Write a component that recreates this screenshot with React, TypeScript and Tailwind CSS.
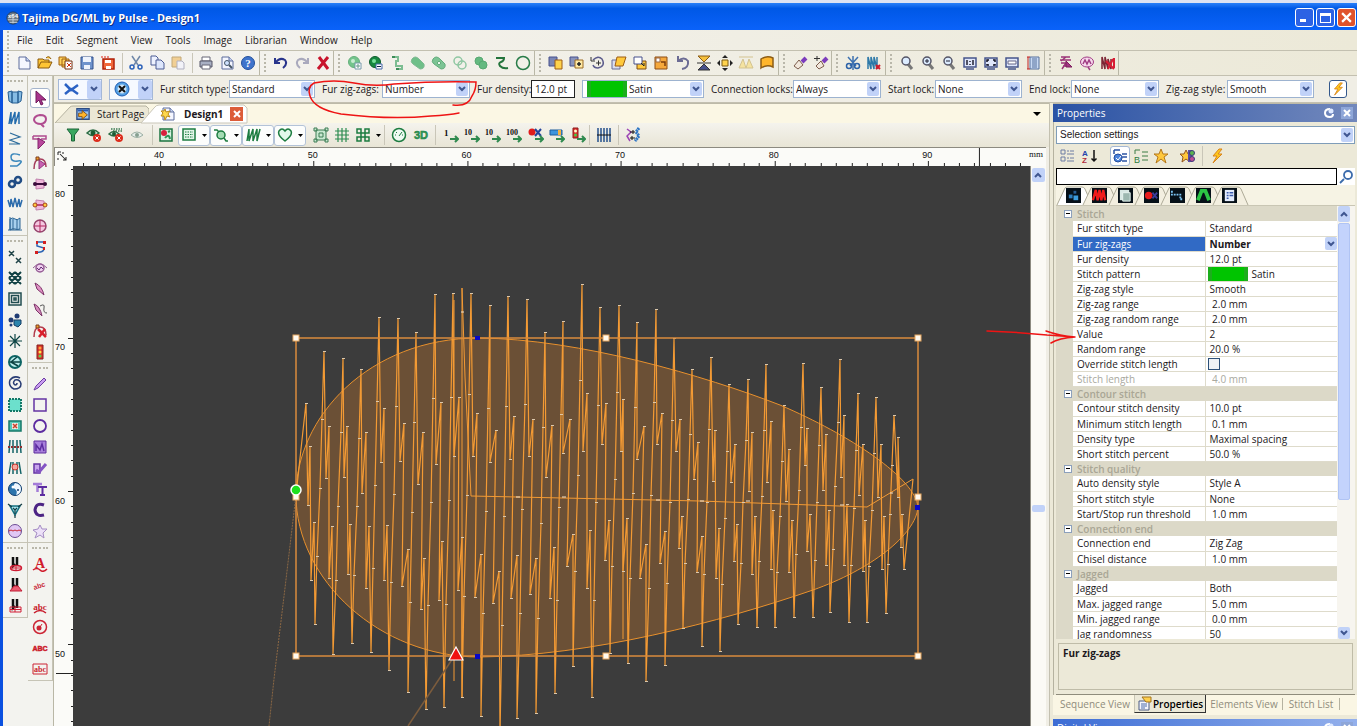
import { Fragment, type ReactNode } from "react";

const page = (
  <>
    <path d="M3 2h7l4 4v8H3z" fill="#f4f6ff" stroke="#5c6c9c" />
    <path d="M10 2v4h4" fill="#c6d2f0" stroke="#5c6c9c" />
  </>
);
const glass = (
  <>
    <path d="M9 9l4 5" stroke="#777" strokeWidth="3" />
    <circle cx="7" cy="6" r="4" fill="#dcecff" stroke="#556" strokeWidth="1.5" />
  </>
);
const needle = <path d="M6 1v9l2-2 M10 1v9" stroke="#111" strokeWidth="2.500" />;
const greenArrow = <path d="M7 12h8M12 9l3 3-3 3" stroke="#2f8a4f" strokeWidth="2" />;
const monitor = <path d="M2 3h12v9H2z M4 14h8" fill="#dfe6fa" stroke="#47568c" strokeWidth="1.5" />;

function glyph(text: string, fill: string, size = 9) {
  return (
    <text x="8" y="12" textAnchor="middle" fontSize={size} fontWeight="700" fill={fill} stroke="none" fontFamily="Liberation Serif, serif">
      {text}
    </text>
  );
}

const icons: Record<string, ReactNode> = {
  new: page,
  open: <path d="M1 13V4h5l1 1h5v3M1 13l3-6h11l-3 6zM9 3q3-3 5 1" fill="#ffc533" stroke="#8a5a10" />,
  multi: (
    <>
      <path d="M1 2h7v8H1zM4 4h7v8H4z" fill="#ffd25c" stroke="#a06010" />
      <path d="M7 6h7v8H7z" fill="#fff" stroke="#703010" />
      <path d="M9 8l4 4M13 8l-4 4" stroke="#d03010" />
    </>
  ),
  save: (
    <>
      <path d="M2 2h12v12H2z" fill="#6f93cc" stroke="#33518c" />
      <path d="M4 2h8v5H4zM5 10h6v4H5z" fill="#eef3fc" stroke="none" />
    </>
  ),
  saveRed: (
    <>
      <path d="M3 4h11v10H3z" fill="#f0683a" stroke="#b02008" strokeWidth="1.5" />
      <path d="M5 5h6v3H5zM6 11h5v3H6z" fill="#fff" stroke="none" />
      <path d="M1 2h9" stroke="#e02010" strokeDasharray="2 1" />
    </>
  ),
  cut: (
    <>
      <path d="M4 1l6 9M12 1L6 10" stroke="#6f87a8" strokeWidth="1.5" />
      <circle cx="4" cy="12" r="2" stroke="#2c62b8" strokeWidth="1.5" />
      <circle cx="12" cy="12" r="2" stroke="#2c62b8" strokeWidth="1.5" />
    </>
  ),
  copy: (
    <>
      <path d="M2 1h5l2 2v7H2z" fill="#eef2ff" stroke="#4c5c94" />
      <path d="M7 5h5l3 3v6H7z" fill="#dde6fc" stroke="#4c5c94" />
    </>
  ),
  paste: (
    <>
      <path d="M2 2h9v10H2z" fill="#f1cf94" stroke="#c2a878" />
      <path d="M7 6h5l2 2v6H7z" fill="#f2f2f8" stroke="#b0b0c0" />
    </>
  ),
  print: (
    <>
      <path d="M4 2h8v4H4z" fill="#fff" stroke="#667" />
      <path d="M2 6h12v6H2z" fill="#a9b0c4" stroke="#556" />
      <path d="M4 10h8v4H4z" fill="#fff" stroke="#667" />
    </>
  ),
  preview: (
    <>
      {page}
      <circle cx="8" cy="8" r="2.5" fill="#cfe2ff" stroke="#456" />
      <path d="M10 10l3 3" stroke="#456" strokeWidth="2" />
    </>
  ),
  help: (
    <>
      <circle cx="8" cy="8" r="6.5" fill="#3f74cc" stroke="#24509c" />
      {glyph("?", "#fff", 11)}
    </>
  ),
  undo: <path d="M2 3v5h5M3 7q4-5 9-2 3 4-2 8" stroke="#28348c" strokeWidth="2" />,
  redo: <path d="M14 3v5H9M13 7Q9 2 4 5q-3 4 2 8" stroke="#a9a9bd" strokeWidth="2" />,
  del: <path d="M4 2l9 12M13 2L3 14" stroke="#c8142c" strokeWidth="3" />,
  addG: (
    <>
      <circle cx="7" cy="7" r="5.5" fill="#74c48c" stroke="#64b07c" />
      <circle cx="6" cy="6" r="2" fill="#c8ecd2" stroke="none" />
      <path d="M8 8h6v6H8z" fill="#fff" stroke="#79a" />
      <path d="M11 9v4M9 11h4" stroke="#698" />
    </>
  ),
  subG: (
    <>
      <circle cx="7" cy="7" r="5.5" fill="#178840" stroke="#0c5c2c" />
      <circle cx="6" cy="6" r="2" fill="#7ae09c" stroke="none" />
      <path d="M8 9h6v5H8z" fill="#fff" stroke="#46a" />
      <path d="M9 11.500h4" stroke="#124" />
    </>
  ),
  steps: (
    <>
      <path d="M3 2h6v4H7v5h6v3H7" stroke="#7cbd92" strokeWidth="2" />
      <path d="M3 2h3M7 14h3" stroke="#3c8c58" strokeWidth="2" />
    </>
  ),
  pill: <path d="M2 4q3-4 7 0l5 5q1 5-4 5L3 9q-3-2-1-5z" fill="#6ebf88" stroke="#7fb892" />,
  pill2: (
    <>
      <path d="M2 4q3-4 7 0l5 5q1 5-4 5L3 9q-3-2-1-5z" fill="#7cc494" stroke="#64ac7c" />
      <path d="M6 8l2-2 2 2-2 2z" fill="#eaf7ee" stroke="#64ac7c" />
    </>
  ),
  rings: (
    <>
      <circle cx="6" cy="6" r="4" stroke="#8fc7a2" strokeWidth="1.5" />
      <circle cx="10" cy="10" r="4" stroke="#8fc7a2" strokeWidth="1.5" />
    </>
  ),
  blob: (
    <>
      <circle cx="6" cy="6" r="4" fill="#64b980" stroke="#58a872" />
      <circle cx="10" cy="10" r="4" fill="#64b980" stroke="#58a872" />
    </>
  ),
  path: <path d="M2 3h8q0 3-3 4t-1 4q3 3 8 2" stroke="#24743c" strokeWidth="2" />,
  circleG: <circle cx="8" cy="8" r="6.500" stroke="#287c48" strokeWidth="1.5" />,
  grpA: (
    <>
      <path d="M1 2h8v9H1z" fill="#7b86b4" stroke="#47518c" />
      <path d="M7 5h7v9H7z" fill="#ffd34c" stroke="#9c5c14" />
    </>
  ),
  grpB: (
    <>
      <path d="M1 2h8v9H1z" fill="#8a94bc" stroke="#47518c" />
      <path d="M6 5h8v8H6z" fill="#ffe9a4" stroke="#9c6c24" />
      <path d="M10 7v4M8 9h4" stroke="#222" strokeWidth="1.5" />
    </>
  ),
  rot: (
    <>
      <path d="M3 5q5-5 9-1 4 7-4 9-4 0-5-3" stroke="#5c5c8c" strokeWidth="1.5" />
      <path d="M1 2v4h4M6 8h5M8.500 5.500v5" stroke="#333" />
    </>
  ),
  skew: (
    <>
      <path d="M1 5h8v9H1z" fill="#d9ddf0" stroke="#666c98" />
      <path d="M6 2h9l-3 9H4z" fill="#ffc93c" stroke="#9c5c14" />
    </>
  ),
  scale: (
    <>
      <path d="M5 6h9v8H5z" fill="#ffc93c" stroke="#7c4c14" />
      <path d="M2 2h8v7H2z" fill="#fff" stroke="#47518c" />
      <path d="M9 8l3 3v-3" stroke="#222" />
    </>
  ),
  fit: (
    <>
      <path d="M2 2h12v12H2z" fill="#f5a83c" stroke="#8c4c14" />
      <path d="M3 3h4v4H3z" fill="#fff" stroke="#964" />
      <path d="M8 7h4v4" stroke="#7c3c0c" strokeWidth="1.500" />
    </>
  ),
  rotL: <path d="M3 1v5h5M3 6q6-5 10 0 1 7-6 8" stroke="#6c6c94" strokeWidth="2" />,
  flip: (
    <>
      <path d="M2 1h12L8 7z" fill="#f5c03c" stroke="#8c5c14" />
      <path d="M2 15h12L8 9zM1 8h14" fill="#47518c" stroke="#333" />
    </>
  ),
  move: (
    <>
      <path d="M8 0l3 3H5zM8 16l3-3H5zM0 8l3-3v6zM16 8l-3-3v6z" fill="#222" stroke="none" />
      <path d="M5 5h6v6H5z" fill="#ffd34c" stroke="#7c5c14" />
    </>
  ),
  peaks: <path d="M1 13h14M1 13l4-9 3 9 3-9 4 9M1 2h14" fill="#f5e3a0" stroke="#d3c390" />,
  warp: <path d="M2 4q6-4 12-1v9q-6-3-12 1z" fill="#ffb62c" stroke="#8c5c14" strokeWidth="1.5" />,
  brush: (
    <>
      <path d="M14 3l-4 4" stroke="#7c3cbc" strokeWidth="4" />
      <path d="M7 5l4 5-5 4-4-3z" fill="#f2e8dc" stroke="#7c5c4c" />
    </>
  ),
  brushP: (
    <>
      <path d="M14 3l-4 4" stroke="#7c3cbc" strokeWidth="4" />
      <path d="M8 6l3 5-5 3-3-3z" fill="#f2e8dc" stroke="#7c5c4c" />
      <path d="M4 1v5M1 3.500h6" stroke="#333" />
    </>
  ),
  trim: (
    <>
      <path d="M3 2l8 9M13 2L5 11M8 1v14" stroke="#3f72b0" strokeWidth="1.5" />
      <circle cx="4" cy="11" r="2.500" stroke="#2c62a8" strokeWidth="1.5" />
      <circle cx="12" cy="11" r="2.500" stroke="#2c62a8" strokeWidth="1.5" />
    </>
  ),
  stitchX: (
    <>
      <path d="M2 14V2l3 12V2l3 12V2l3 12V2" stroke="#2c78a8" strokeWidth="1.500" />
      <path d="M10 10l4 4M14 10l-4 4" stroke="#d01c2c" strokeWidth="2" />
    </>
  ),
  zoom: glass,
  zoomIn: (
    <>
      {glass}
      <path d="M7 4v4M5 6h4" stroke="#223" />
    </>
  ),
  zoomOut: (
    <>
      {glass}
      <path d="M5 6h4" stroke="#223" />
    </>
  ),
  mon11: (
    <>
      {monitor}
      <path d="M5 5v5M11 5v5M8 6v1M8 9v1" stroke="#223" strokeWidth="1.500" />
    </>
  ),
  monFit: (
    <>
      {monitor}
      <path d="M4 7V5h2M10 5h2v2M4 9v1h2M10 10h2V9" stroke="#112" strokeWidth="1.500" />
    </>
  ),
  monSel: (
    <>
      {monitor}
      <path d="M4 6h8v3H4z" fill="#fff" stroke="#668" />
    </>
  ),
  ruler: (
    <>
      <path d="M5 2h9v12H5z" fill="#c8daf4" stroke="#56709c" />
      <path d="M2 2h3M2 14h3M3 2v12" stroke="#c02020" />
      <path d="M7 4h5M7 6h5M7 8h5M7 10h5M7 12h5" stroke="#56709c" />
    </>
  ),
  seqP: (
    <>
      <path d="M3 2h9M2 5h11M3 8h5M5 11h3M8 2L3 6M8 8l-4 6" stroke="#9c3478" strokeWidth="1.500" />
      <path d="M8 6l6 6H8z" fill="#a43484" stroke="#7c1c5c" />
    </>
  ),
  wave: (
    <>
      <ellipse cx="8" cy="7" rx="6.500" ry="5" fill="#f6d8ec" stroke="#a03c84" />
      <path d="M4 9l2-4 2 4 2-4 2 4M9 12l2 3" stroke="#a03c84" strokeWidth="1.500" />
    </>
  ),
  redStitch: (
    <>
      <path d="M2 14V2l3 12V2l3 12V4l3 10V4" stroke="#7c2434" strokeWidth="1.500" />
      <path d="M6 6l8 8M13 4l-5 10M14 3v10" stroke="#d81c34" strokeWidth="2" />
    </>
  ),
  trimBlue: <path d="M2 3l6 6 7-5M2 13l6-5 7 5" stroke="#2b62c4" strokeWidth="2.500" />,
  stopBlue: (
    <>
      <circle cx="8" cy="8" r="7" fill="#54a0e4" stroke="#1c5cb4" />
      <circle cx="8" cy="8" r="4.500" fill="#cfe6fa" stroke="none" />
      <path d="M5 5l6 6M11 5l-6 6" stroke="#111" strokeWidth="2" />
    </>
  ),
  bolt: <path d="M10 1L4 8h4l-4 7 9-9H9l4-5z" fill="#ffc81c" stroke="#d8841c" />,
  filter: <path d="M2 2h12L9.500 8v6h-3V8z" fill="#3aa860" stroke="#1c6438" />,
  eyeX: (
    <>
      <path d="M1 6q6-6 12 0-6 5-12 0z" fill="#d9f0e0" stroke="#2c6c44" strokeWidth="1.500" />
      <circle cx="7" cy="6" r="2.500" fill="#1c5c34" stroke="none" />
      <circle cx="11" cy="11" r="4" fill="#dc2c1c" stroke="none" />
      <path d="M9.500 9.500l3 3M12.500 9.500l-3 3" stroke="#fff" />
    </>
  ),
  eyeDots: (
    <>
      <path d="M3 2h11M5 4h9" stroke="#3c7c54" strokeWidth="1.500" strokeDasharray="1.500 1" />
      <path d="M1 7q5-5 10 0-5 4-10 0z" fill="#d9f0e0" stroke="#2c6c44" strokeWidth="1.500" />
      <circle cx="6" cy="7" r="2" fill="#1c5c34" stroke="none" />
      <circle cx="11" cy="11" r="4" fill="#dc2c1c" stroke="none" />
      <path d="M9.500 9.500l3 3M12.500 9.500l-3 3" stroke="#fff" />
    </>
  ),
  eye: (
    <>
      <path d="M2 8q6-6 12 0-6 5-12 0z" fill="#e8eeea" stroke="#9cb0a4" />
      <circle cx="8" cy="8" r="2" fill="#86a090" stroke="none" />
    </>
  ),
  picRed: (
    <>
      <path d="M2 2h12v12H2z" fill="#d8f2e0" stroke="#1c7440" strokeWidth="1.500" />
      <circle cx="6" cy="6" r="3" fill="#d8203c" stroke="none" />
      <path d="M7 11q4-5 5 1M10 5l2-1" stroke="#2c9454" strokeWidth="2" />
    </>
  ),
  dots: (
    <>
      <path d="M2 2h12v11H2z" fill="#e2f5e8" stroke="#1c7c40" strokeWidth="1.500" />
      <path d="M4 5h8M4 7.500h8M4 10h8" stroke="#1c7c40" strokeWidth="1.200" strokeDasharray="1.500 1" />
    </>
  ),
  lens: (
    <>
      <circle cx="8" cy="8" r="4" fill="#a4dcb4" stroke="#1c7c40" strokeWidth="1.500" />
      <path d="M1 3h3l2 2M11 11l2 3h2" stroke="#1c7c40" strokeWidth="1.500" />
    </>
  ),
  zig: <path d="M2 14L4 2v12L8 2v12l4-12v12l3-12" stroke="#1c7c40" strokeWidth="1.500" />,
  heart: <path d="M8 14Q0 8 2 4q3-4 6 0 3-4 6 0 2 4-6 10z" fill="#e2f8ea" stroke="#1c7c40" strokeWidth="1.500" />,
  frame: <path d="M3 3h10v10H3zM1 1h3v3H1zM12 1h3v3h-3zM1 12h3v3H1zM12 12h3v3h-3zM6 6h4v4H6z" fill="#c8e8d0" stroke="#3c7c54" />,
  grid: <path d="M4 1v14M8 1v14M12 1v14M1 4h14M1 8h14M1 12h14" stroke="#2c8c50" strokeWidth="1.200" />,
  cmd: <path d="M6 6v4h4V6zM6 6H2V2h4zM10 6V2h4v4zM6 10v4H2v-4zM10 10h4v4h-4z" stroke="#1c7c40" strokeWidth="1.500" />,
  gauge: (
    <>
      <circle cx="8" cy="8" r="6.500" fill="#eefaf2" stroke="#1c7c40" strokeWidth="1.500" />
      <path d="M8 9l3-4M5 5l1 1M4 8h1M11 8h1" stroke="#1c7c40" />
    </>
  ),
  threeD: (
    <text x="8" y="12" textAnchor="middle" fontSize="11" fontWeight="700" fill="#2c9c58" fontFamily="Liberation Sans, sans-serif" stroke="#1c7c40" strokeWidth="0.500">3D</text>
  ),
  one: <><text x="1" y="9" fontSize="9" fontWeight="700" stroke="none" fill="#111" fontFamily="Liberation Serif, serif">1</text>{greenArrow}</>,
  ten: <g><text x="0" y="8" fontSize="8" fontWeight="700" stroke="none" fill="#111" fontFamily="Liberation Serif, serif">10</text>{greenArrow}</g>,
  hundred: <g><text x="0" y="8" fontSize="8" fontWeight="700" stroke="none" fill="#111" fontFamily="Liberation Serif, serif">100</text>{greenArrow}</g>,
  dotX: (
    <>
      <circle cx="4" cy="5" r="3.500" fill="#e01c1c" stroke="none" />
      <path d="M7 2l6 7M13 2L7 9" stroke="#24449c" strokeWidth="2" />
      {greenArrow}
    </>
  ),
  tube: (
    <>
      <path d="M1 3h12v5H1z" fill="#3c94dc" stroke="#1c5c9c" />
      <path d="M9 3h3v5H9z" fill="#f5b03c" stroke="none" />
      {greenArrow}
    </>
  ),
  light: (
    <>
      <path d="M3 1h5v10H3z" fill="#dc2c2c" stroke="#8c1c1c" />
      <circle cx="5.500" cy="4" r="1.500" fill="#ffc" stroke="none" />
      <circle cx="5.500" cy="8" r="1.500" fill="#4c4" stroke="none" />
      {greenArrow}
    </>
  ),
  comb: (
    <>
      <path d="M2 1v14M5 1v14M8 1v14M11 1v14M14 1v14" stroke="#24508c" strokeWidth="1.500" />
      <path d="M1 8h14" stroke="#111" />
    </>
  ),
  morph: (
    <>
      <path d="M2 2l4 3-4 4 3 5" stroke="#9c44b4" strokeWidth="1.500" />
      <path d="M5 5h5M10 11H5M8 3v4M7 9v4" stroke="#111" />
      <path d="M14 1l-3 4 3 4-4 5" stroke="#2c74c4" strokeWidth="3" strokeDasharray="2 0.500" />
    </>
  ),
  // segment palette
  satin: <path d="M1 3l4-1v12l-3-2zM5 3h6v11H5zM11 2l4 1-1 9-3 2z" fill="#86bce4" stroke="#245c90" />,
  steil: <path d="M2 14L4 2v12L8 2v12l4-12v12" stroke="#246cac" strokeWidth="1.500" />,
  zed: <path d="M3 2l10 4L3 9l10 4H2" stroke="#2c6c9c" strokeWidth="1.200" />,
  ess: <path d="M13 3Q4 0 4 5t7 4-1 5H3" stroke="#3c88bc" strokeWidth="1.500" />,
  links: (
    <>
      <circle cx="5" cy="10" r="3" stroke="#204c84" strokeWidth="2.500" />
      <circle cx="11" cy="6" r="3" stroke="#204c84" strokeWidth="2.500" />
    </>
  ),
  grass: <path d="M1 5l2 7 1-8 2 8 2-9 2 9 2-8 1 8 2-7" stroke="#2c6cac" strokeWidth="1.500" />,
  fill: <path d="M3 3q3-2 5 0t5-1v11q-3 1-5 0t-5 1zM6 3v11M10 3v11M1 14h14M3 1v13" fill="#a8d0ee" stroke="#2c6494" />,
  xx: <path d="M2 2l5 5M7 2L2 7M9 9l5 5M14 9l-5 5" stroke="#204448" strokeWidth="1.500" />,
  mesh: <path d="M2 2l12 12M8 2l6 6M2 8l6 6M14 2L2 14M8 2L2 8M14 8l-6 6" stroke="#104044" strokeWidth="2" />,
  spiralSq: <path d="M2 2h12v12H2zM4.500 4.500h7v7h-7zM7 7h2v2H7z" stroke="#204c50" strokeWidth="1.500" />,
  motif: (
    <>
      <path d="M7 8h7v4l-3 3-4-2z" fill="#2c84ac" stroke="#143c64" />
      <circle cx="4" cy="8" r="2.500" fill="#203c74" stroke="none" />
      <circle cx="10" cy="4" r="2.500" fill="#203c74" stroke="none" />
      <circle cx="4" cy="13" r="1.500" fill="#203c74" stroke="none" />
    </>
  ),
  star: <path d="M8 1v14M1 8h14M3 3l10 10M13 3L3 13" stroke="#0c4444" strokeWidth="1.200" />,
  wheel: (
    <>
      <circle cx="8" cy="8" r="6" fill="#b8ecec" stroke="#0c6464" strokeWidth="2" />
      <path d="M3 8h10M4 8l6-5M4 8l7 4" stroke="#0c4444" strokeWidth="1.500" />
    </>
  ),
  swirl: <path d="M13 3Q7 0 3 5q-2 6 4 9 7 0 7-5-1-5-6-4-3 3 0 5 2 0 2-2" stroke="#283c74" strokeWidth="1.500" />,
  patch: <path d="M2 2h12v12H2z" fill="#6ce0cc" stroke="#147868" strokeWidth="2" strokeDasharray="2 1" />,
  patchX: (
    <>
      <path d="M2 3h12v10H2z" fill="#58c8b8" stroke="#147868" strokeWidth="1.500" />
      <path d="M5 5h6v6H5z" fill="#f4e8e0" stroke="none" />
      <path d="M6 6l4 4M10 6l-4 4" stroke="#c8402c" strokeWidth="1.500" />
    </>
  ),
  combR: (
    <>
      <path d="M3 1l-1 13M6 1v13M10 1v13M13 1l1 13" stroke="#146468" strokeWidth="1.500" />
      <path d="M1 8h14" stroke="#903030" strokeWidth="2" strokeDasharray="2 1" />
    </>
  ),
  combRose: (
    <>
      <path d="M4 2L2 14M6 2v12M10 2v12M12 2l2 12" stroke="#146468" strokeWidth="1.500" />
      <circle cx="8" cy="7" r="3" fill="#f4a8a0" stroke="#c8342c" />
    </>
  ),
  yin: (
    <>
      <circle cx="8" cy="8" r="6.500" fill="#2c74ac" stroke="#143c6c" />
      <path d="M8 2q6 1 6 6t-5 6q2-4-1-6t0-6z" fill="#f0f8ff" stroke="none" />
      <circle cx="6" cy="6" r="1.500" fill="#fff" stroke="none" />
      <circle cx="11" cy="9" r="1" fill="#143c6c" stroke="none" />
    </>
  ),
  tri: (
    <>
      <path d="M3 4h10L8 13z" fill="#a8e4ec" stroke="#147080" strokeWidth="1.500" />
      <path d="M1 2l4 3M15 2l-4 3M8 13v3M8 8v4M8 8L6 6M8 8l2-2" stroke="#143c44" strokeWidth="1.200" />
    </>
  ),
  ballR: (
    <>
      <circle cx="8" cy="8" r="6.500" fill="#e0c8f4" stroke="#6c4c94" />
      <path d="M2 8l2-1 2 1 2-1 2 1 2-1 2 1" stroke="#c8242c" />
    </>
  ),
  needleO: <>{needle}<ellipse cx="9" cy="12" rx="5.500" ry="2.500" stroke="#d01c34" strokeWidth="1.500" /><path d="M9 9v6M4 12h10" stroke="#d01c34" /></>,
  needleT: <>{needle}<path d="M3 14l4-5h4l4 5z" fill="#ee5c70" stroke="#c01c34" /></>,
  needleB: <>{needle}<path d="M3 9h11v5H3zM8 9v5M3 11.500h11" stroke="#d01c34" /></>,
  // selection palette
  arrow: <path d="M4 1v12l3-3 2 5 2-1-2-4h5z" fill="#a8348c" stroke="#701c5c" />,
  lasso: <path d="M8 2q6 0 6 4t-5 5q-6 0-7-4 0-4 6-5zM9 11l3 3" stroke="#b04c90" strokeWidth="2" />,
  polysel: (
    <>
      <path d="M1 2h13v3H9M1 2v3h5" stroke="#b04c90" strokeWidth="1.500" />
      <path d="M6 4v11l7-7z" fill="#b8489c" stroke="#84246c" />
    </>
  ),
  node: (
    <>
      <path d="M2 14Q2 4 8 4t6 8" stroke="#a43c5c" strokeWidth="1.500" />
      <path d="M7 5v9l6-5z" fill="#c860b0" stroke="#94347c" />
      <path d="M4 2h3v3H4z" fill="#f4a02c" stroke="#7c3c1c" />
    </>
  ),
  angleB: (
    <>
      <path d="M4 3l8 1v8l-8 1z" fill="#f0b8dc" stroke="#c080ac" />
      <path d="M2 8h12" stroke="#3c0c3c" strokeWidth="2" />
      <circle cx="3" cy="8" r="2" fill="#3c0c3c" stroke="none" />
      <circle cx="13" cy="8" r="2" fill="#3c0c3c" stroke="none" />
    </>
  ),
  angleO: (
    <>
      <path d="M4 3l8 1v8l-8 1z" fill="#f0b8dc" stroke="#c080ac" />
      <path d="M2 8h12" stroke="#b0245c" strokeWidth="1.500" />
      <circle cx="3" cy="8" r="2" fill="#ffc83c" stroke="#a4441c" />
      <circle cx="13" cy="8" r="2" fill="#ffc83c" stroke="#a4441c" />
    </>
  ),
  target: (
    <>
      <circle cx="8" cy="8" r="6" fill="#f4c8e0" stroke="#94446c" strokeWidth="1.500" />
      <path d="M8 2v12M2 8h12" stroke="#b0245c" />
    </>
  ),
  curveR: (
    <>
      <path d="M12 3H5v4l7 2q0 5-8 4" stroke="#2c64b4" strokeWidth="1.500" />
      <path d="M11 2h3v3h-3zM4 2h2v3H4zM3 12h3v3H3zM11 8h2v3h-2z" fill="#d42020" stroke="none" />
    </>
  ),
  eyeP: (
    <>
      <path d="M1 8q7-8 14 0" stroke="#945c94" />
      <circle cx="8" cy="8" r="4" fill="#f0d0f0" stroke="#945c94" strokeWidth="1.500" />
      <path d="M5 8l2 2 2-3 2 2" stroke="#642c74" />
    </>
  ),
  knife: <path d="M3 2q7 3 9 12L5 8z" fill="#e090c4" stroke="#7c3468" />,
  knife2: (
    <>
      <path d="M2 2q6 2 8 12L4 8z" fill="#d48cbc" stroke="#7c3468" />
      <path d="M8 4q5-3 4 2t3 5" stroke="#555" />
    </>
  ),
  nodeX: (
    <>
      <path d="M2 14Q2 4 8 4t6 8" stroke="#b03c4c" strokeWidth="1.500" />
      <path d="M6 6l8 8M13 6l-6 8" stroke="#d8202c" strokeWidth="2.500" />
      <path d="M4 2h3v3H4z" fill="#f4a02c" stroke="#7c3c1c" />
    </>
  ),
  traffic: (
    <>
      <path d="M5 1h6v14H5z" fill="#d8342c" stroke="#84201c" />
      <circle cx="8" cy="4" r="1.500" fill="#ffa43c" stroke="none" />
      <circle cx="8" cy="8" r="1.500" fill="#ffe44c" stroke="none" />
      <circle cx="8" cy="12" r="1.500" fill="#5cd44c" stroke="none" />
    </>
  ),
  pencil: <path d="M2 14l2-4 8-8 2 2-8 8z" fill="#c89cf0" stroke="#6c3ca4" />,
  rectP: <path d="M2 2h12v12H2z" stroke="#6434a4" strokeWidth="1.500" />,
  ringP: <circle cx="8" cy="8" r="6" stroke="#5c2ca0" strokeWidth="1.800" />,
  picP: (
    <>
      <path d="M2 2h12v12H2z" fill="#a880dc" stroke="#5c2c9c" />
      <path d="M4 12V6l4 5 2-6 2 7" stroke="#5c2ca0" strokeWidth="1.500" />
    </>
  ),
  digit: (
    <>
      <path d="M2 4h6v9H2z" fill="#c8a4ec" stroke="#6434a4" strokeWidth="1.500" />
      <path d="M4 10l3 2 7-8" stroke="#8454c4" strokeWidth="3" />
    </>
  ),
  tt: (
    <>
      <path d="M1 3h9M5.500 3v8" stroke="#a47cd8" strokeWidth="2.500" />
      <path d="M6 6h9M10.500 6v8M8 14h5" stroke="#5c2ca0" strokeWidth="2" />
    </>
  ),
  cee: <path d="M12 3Q4 0 3 8q1 7 9 5" stroke="#4c2484" strokeWidth="3" />,
  starP: <path d="M8 2l2 4 5 0-4 4 1 5-4-3-5 3 2-5-4-3 5-1z" fill="#ece0f8" stroke="#a48cc4" />,
  letA: <>{glyph("A", "#d01c2c", 14)}<path d="M1 14q4-3 7 0t7-1" stroke="#d01c2c" strokeWidth="1.500" /></>,
  abSlant: (
    <text x="1" y="11" fontSize="7" fontWeight="700" fill="#c82838" stroke="none" transform="rotate(-18 8 8)" fontFamily="Liberation Sans, sans-serif">abc</text>
  ),
  abArc: <>{glyph("abc", "#c81c2c", 9)}<path d="M2 15q6-5 12 0" stroke="#c81c2c" strokeWidth="1.500" /></>,
  spiralR: (
    <>
      <circle cx="8" cy="8" r="6.500" stroke="#cc2434" strokeWidth="1.500" />
      <circle cx="7" cy="9" r="2.500" fill="#cc2434" stroke="none" />
      <path d="M8 8l2-3" stroke="#cc2434" />
    </>
  ),
  abcBold: (
    <text x="8" y="11" textAnchor="middle" fontSize="7" fontWeight="700" fill="#cc1c2c" stroke="#cc1c2c" strokeWidth="0.500" fontFamily="Liberation Sans, sans-serif">ABC</text>
  ),
  abcBox: <><path d="M1 3h14v10H1z" stroke="#cc2434" /><text x="8" y="11" textAnchor="middle" fontSize="8" fontWeight="700" fill="#c81c2c" stroke="none" fontFamily="Liberation Serif, serif">abc</text></>,
  // property panel
  tree: <path d="M1 2h4v4H1zM1 9h4v4H1zM7 3h2M10 3h4M7 6h7M7 10h2M10 10h4M7 13h7" stroke="#6c7ca4" />,
  az: (
    <>
      <text x="0" y="8" fontSize="8" fontWeight="700" fill="#2444ac" stroke="none" fontFamily="Liberation Sans, sans-serif">A</text>
      <text x="0" y="15" fontSize="8" fontWeight="700" fill="#b02c3c" stroke="none" fontFamily="Liberation Sans, sans-serif">Z</text>
      <path d="M12 2v11M9.500 10.500L12 13l2.500-2.500" stroke="#111" strokeWidth="1.500" />
    </>
  ),
  treeChk: (
    <>
      <path d="M2 2h6M2 2v4M10 6h5M10 9h5M10 13h5" stroke="#2c54a4" strokeWidth="1.500" />
      <circle cx="6" cy="10" r="4" fill="#4c84dc" stroke="#244c9c" />
      <path d="M4 10l2 2 3-4" stroke="#fff" />
    </>
  ),
  treeB: (
    <>
      <path d="M2 6V2h5M9 4h6M9 8h6M9 12h6" stroke="#3c7c44" />
      <text x="1" y="15" fontSize="9" fill="#2c7c3c" stroke="none" fontFamily="Liberation Sans, sans-serif">B</text>
    </>
  ),
  fav: <path d="M8 1l2 5h5l-4 3 2 6-5-4-5 4 2-6-4-3h5z" fill="#ffc83c" stroke="#b4781c" />,
  favB: (
    <>
      <path d="M6 2l2 4h4l-3 3 1 5-4-3-4 3 1-5-3-3h4z" fill="#ffc83c" stroke="#94541c" />
      <path d="M8 2h4v12H8z" fill="#5c4ca4" stroke="none" />
      <circle cx="12" cy="5" r="2.500" fill="#5cb44c" stroke="#3c3c7c" />
      <circle cx="12" cy="11" r="2.500" fill="#c04c94" stroke="#3c3c7c" />
    </>
  ),
  search: <path d="M6 10l-4 4M10 2a4 4 0 1 1 0 8 4 4 0 0 1 0-8z" stroke="#3c6cac" strokeWidth="1.800" />,
  logo: (
    <>
      <circle cx="8" cy="8" r="7" fill="#6c7884" stroke="#243c5c" />
      <path d="M2 10h12M4 13h9M8 8v6" stroke="#c8d4dc" />
      <text x="8" y="8" textAnchor="middle" fontSize="7" fontWeight="700" fill="#fff" stroke="none" fontFamily="Liberation Sans, sans-serif">x64</text>
    </>
  ),
  startPage: (
    <>
      <path d="M1 2h14v12H1z" fill="#9cc4f0" stroke="#2c4c84" strokeWidth="1.500" />
      <path d="M2 3h12v2H2z" fill="#2c5cb4" stroke="none" />
      <path d="M3 7h4V4l6 5-6 5v-3H3z" fill="#ffb42c" stroke="#7c4c14" />
    </>
  ),
  docStar: <>{page}<path d="M5 3l1 3 4-1-2 3 2 3-3-1-2 4-1-4-3 0 2-3-2-2 3 0z" fill="#ffd84c" stroke="#bc8c1c" /></>,
  hand: (
    <>
      <path d="M2 5h10v9H2z" fill="#f4f4fc" stroke="#4c5c84" />
      <path d="M4 8h6M4 10h6M4 12h4" stroke="#4c6cac" />
      <path d="M5 1h9v5H9z" fill="#ffd04c" stroke="#a4741c" />
    </>
  ),
};

function Icon({ name, className = "" }: { name: string; className?: string }) {
  return (
    <svg viewBox="0 0 16 16" className={`h-4 w-4 shrink-0 ${className}`} fill="none" stroke="#333" strokeWidth="1" aria-hidden="true">
      {icons[name]}
    </svg>
  );
}

function IconButton({ name }: { name: string }) {
  return (
    <button type="button" aria-label={name} className="flex items-center justify-center">
      <Icon name={name} />
    </button>
  );
}

function Chevron({ className = "h-[15px] w-3" }: { className?: string }) {
  return (
    <span className={`flex items-center justify-center rounded-[2px] bg-[#c1d2f8] ${className}`}>
      <svg viewBox="0 0 8 6" className="h-[6px] w-2" fill="none" stroke="#3f5690" strokeWidth="2">
        <path d="M1 1l3 3 3-3" />
      </svg>
    </span>
  );
}

function Combo({ label, value, labelWidth, width, swatch }: { label: string; value: string; labelWidth: string; width: string; swatch?: boolean }) {
  return (
    <label className="flex shrink-0 items-center">
      <span className={`whitespace-nowrap ${labelWidth}`}>{label}</span>
      <span className={`relative block h-[18px] ${width}`}>
        <select
          aria-label={label || value}
          className={`h-[18px] w-full appearance-none border border-[#9db3d0] bg-white pr-3 ${swatch ? "pl-[46px]" : "pl-0.5"}`}
        >
          <option>{value}</option>
        </select>
        {swatch && <span className="absolute top-px left-[5px] h-4 w-10 border-x-4 border-[#1cae1c] bg-[#00c400]" />}
        <Chevron className="pointer-events-none absolute top-[2px] right-[2px] h-[14px] w-3" />
      </span>
    </label>
  );
}

function Grip({ vertical }: { vertical?: boolean }) {
  return vertical ? (
    <span className="mx-auto my-1 h-[2px] w-4 shrink-0 border-t-2 border-dotted border-[#b9b7aa]" />
  ) : (
    <span className="mx-1 h-[18px] w-[2px] shrink-0 border-l-2 border-dotted border-[#b9b7aa]" />
  );
}

const menus = ["File", "Edit", "Segment", "View", "Tools", "Image", "Librarian", "Window", "Help"];

const toolGroups = [
  { width: "w-[257px]", items: ["new", "open", "multi", "save", "saveRed", "|", "cut", "copy", "paste", "|", "print", "preview", "help"] },
  { width: "w-[74px]", items: ["undo", "redo", "del"] },
  { width: "w-[201px]", items: ["addG", "subG", "steps", "pill", "pill2", "rings", "blob", "path", "circleG"] },
  { width: "w-[244px]", items: ["grpA", "grpB", "rot", "skew", "scale", "fit", "rotL", "flip", "move", "peaks", "warp"] },
  { width: "w-[53px]", items: ["brush", "brushP"] },
  { width: "w-[54px]", items: ["trim", "stitchX"] },
  { width: "w-[159px]", items: ["zoom", "zoomIn", "zoomOut", "mon11", "monFit", "monSel", "ruler"] },
  { width: "w-[74px]", items: ["seqP", "wave", "redStitch"] },
];

const palettes = [
  [
    { height: "h-[160px]", items: ["satin", "steil", "zed", "ess", "links", "grass", "fill"] },
    { height: "h-[307px]", items: ["xx", "mesh", "spiralSq", "motif", "star", "wheel", "swirl", "patch", "patchX", "combR", "combRose", "yin", "tri", "ballR"] },
    { height: "h-[75px]", items: ["needleO", "needleT", "needleB"] },
  ],
  [
    { height: "h-[287px]", items: ["arrow", "lasso", "polysel", "node", "angleB", "angleO", "target", "curveR", "eyeP", "knife", "knife2", "nodeX", "traffic"] },
    { height: "h-[180px]", items: ["pencil", "rectP", "ringP", "picP", "digit", "tt", "cee", "starP"] },
    { height: "h-[138px]", items: ["letA", "abSlant", "abArc", "spiralR", "abcBold", "abcBox"] },
  ],
];

type Row = { name: string; value?: string; group?: boolean; selected?: boolean; disabled?: boolean; kind?: "swatch" | "check" };

const rows: Row[] = [
  { name: "Stitch", group: true },
  { name: "Fur stitch type", value: "Standard" },
  { name: "Fur zig-zags", value: "Number", selected: true },
  { name: "Fur density", value: "12.0 pt" },
  { name: "Stitch pattern", value: "Satin", kind: "swatch" },
  { name: "Zig-zag style", value: "Smooth" },
  { name: "Zig-zag range", value: " 2.0 mm" },
  { name: "Zig-zag random range", value: " 2.0 mm" },
  { name: "Value", value: "2" },
  { name: "Random range", value: "20.0 %" },
  { name: "Override stitch length", kind: "check" },
  { name: "Stitch length", value: " 4.0 mm", disabled: true },
  { name: "Contour stitch", group: true },
  { name: "Contour stitch density", value: "10.0 pt" },
  { name: "Minimum stitch length", value: " 0.1 mm" },
  { name: "Density type", value: "Maximal spacing" },
  { name: "Short stitch percent", value: "50.0 %" },
  { name: "Stitch quality", group: true },
  { name: "Auto density style", value: "Style A" },
  { name: "Short stitch style", value: "None" },
  { name: "Start/Stop run threshold", value: " 1.0 mm" },
  { name: "Connection end", group: true },
  { name: "Connection end", value: "Zig Zag" },
  { name: "Chisel distance", value: " 1.0 mm" },
  { name: "Jagged", group: true },
  { name: "Jagged", value: "Both" },
  { name: "Max. jagged range", value: " 5.0 mm" },
  { name: "Min. jagged range", value: " 0.0 mm" },
  { name: "Jag randomness", value: "50" },
];

// One fur column per row: top tip, upper valley, upper peak, lower valley, lower peak, bottom tip
const fur = [
  [306, 403, 308, 505, 310, 446, 311, 580, 314, 522, 315, 624],
  [324, 351, 326, 478, 329, 426, 329, 578, 332, 526, 333, 654],
  [343, 358, 344, 477, 347, 426, 348, 574, 350, 524, 352, 643],
  [361, 369, 362, 493, 366, 432, 366, 588, 369, 526, 371, 652],
  [379, 317, 381, 462, 384, 408, 384, 580, 387, 525, 389, 670],
  [398, 318, 400, 461, 404, 423, 402, 586, 408, 549, 408, 692],
  [416, 332, 418, 484, 423, 432, 421, 609, 424, 558, 426, 709],
  [435, 294, 436, 464, 441, 402, 439, 600, 442, 541, 444, 707],
  [453, 293, 454, 456, 459, 397, 458, 590, 462, 537, 462, 697],
  [471, 293, 473, 456, 477, 413, 475, 597, 481, 554, 481, 716],
  [490, 305, 490, 462, 496, 430, 493, 603, 499, 571, 500, 735],
  [508, 296, 510, 459, 514, 416, 511, 598, 517, 555, 517, 718],
  [527, 299, 529, 456, 533, 419, 530, 594, 536, 558, 536, 713],
  [545, 332, 546, 477, 552, 425, 550, 598, 554, 547, 555, 693],
  [563, 321, 563, 453, 570, 419, 567, 566, 573, 534, 573, 666],
  [582, 284, 583, 451, 587, 393, 587, 588, 590, 530, 592, 697],
  [600, 307, 602, 444, 606, 403, 605, 560, 609, 520, 610, 653],
  [619, 305, 621, 451, 623, 399, 623, 571, 627, 518, 628, 663],
  [637, 322, 637, 459, 644, 426, 640, 578, 646, 544, 646, 681],
  [656, 309, 657, 444, 662, 413, 660, 563, 665, 531, 665, 665],
  [674, 338, 676, 451, 680, 419, 679, 548, 682, 516, 683, 628],
  [692, 369, 694, 479, 698, 442, 697, 572, 702, 536, 702, 646],
  [711, 357, 713, 481, 715, 430, 716, 578, 719, 528, 720, 651],
  [729, 384, 731, 482, 735, 444, 734, 561, 737, 524, 738, 624],
  [748, 379, 749, 491, 752, 432, 752, 574, 755, 516, 757, 627],
  [766, 364, 767, 482, 771, 421, 771, 569, 773, 510, 775, 627],
  [784, 405, 786, 501, 789, 449, 789, 572, 792, 520, 794, 617],
  [803, 363, 805, 465, 807, 428, 807, 551, 810, 514, 813, 617],
  [821, 387, 823, 490, 826, 434, 826, 565, 829, 510, 830, 612],
  [840, 359, 841, 477, 844, 415, 844, 565, 847, 504, 849, 622],
  [858, 393, 859, 495, 863, 444, 863, 571, 865, 520, 867, 622],
  [876, 397, 878, 497, 881, 444, 882, 569, 884, 516, 886, 613],
  [894, 415, 898, 497, 898, 437, 901, 547, 902, 514, 904, 569],
];

const points = fur.flatMap((column, c) => {
  const out: number[][] = [];
  for (let i = 0; i < column.length; i += 2) out.push([column[i], column[i + 1]]);
  // needle penetrations on the long run up to the next tip
  const next = fur[c + 1];
  if (next) {
    const [tx, ty] = out[5];
    for (const t of [0.25, 0.5, 0.75]) {
      out.push([Math.round(tx + (next[0] - tx) * t), Math.round(ty + (next[1] - ty) * t)]);
    }
  }
  return out;
});
const furPath = "M296 495L" + points.map((p) => p.join(" ")).join("L") + "L913 479";

const outline =
  "M296 495C296 418 368 338 479 338C580 339 705 376 780 405C850 435 915 478 918 507C916 535 870 570 813 590C720 622 590 656 479 657C380 657 296 580 296 495Z";

const handles = [
  [296, 338], [606, 338], [918, 338], [296, 497], [918, 497], [296, 656], [606, 656], [918, 656],
];

function Design() {
  return (
    <svg viewBox="73 166 957 560" preserveAspectRatio="xMinYMin slice" className="block h-full w-full" fill="none" role="img" aria-label="Design1">
      <path d={outline} fill="#6b5036" stroke="#e8902c" />
      <path d={furPath} stroke="#f39a34" strokeWidth="1.200" />
      <path d="M462 697V288L465 377L471 496L609 499L700 501L867 507L913 479M454 681V300M623 399V639" stroke="#f39a34" />
      {points.map(([x, y], i) => (
        <path key={i} d={`M${x - 1} ${y + 0.5}h3`} stroke="#dcc8ac" strokeWidth="1" />
      ))}
      <path d="M516 497h4M562 497h4M656 500h4M700 501h4M746 501h4M840 505h4M890 493h3M461 312h3" stroke="#f5e4cc" />
      <path d="M296 338H918V656H296Z" stroke="#d98a3c" strokeWidth="1.500" />
      <path d="M296 495L285 588L274 679L269 726" stroke="#8c6844" strokeDasharray="2 1" />
      <path d="M457 652L408 726" stroke="#7c5c3c" strokeWidth="1.500" />
      {handles.map(([x, y]) => (
        <rect key={`${x}-${y}`} x={x - 3} y={y - 3} width="6" height="6" fill="#fffaf0" stroke="#e8a860" />
      ))}
      <path d="M475 336h5v4h-5zM475 654h5v5h-5zM915 505h5v5h-5z" fill="#0808c8" />
      <circle cx="296" cy="490" r="5" fill="#1ee01e" stroke="#fff" strokeWidth="1.500" />
      <path d="M456 647l7 13h-14z" fill="#f01010" stroke="#fff" strokeWidth="1.200" />
    </svg>
  );
}

const hTicks = Array.from({ length: 62 }, (_, i) => 84 + i * 15.35);
const vTicks = Array.from({ length: 37 }, (_, i) => 169.2 + i * 15.33);

function HorizontalRuler() {
  return (
    <svg viewBox="56 148 990 18" preserveAspectRatio="xMinYMin slice" className="block h-[18px] w-full bg-[#fbfbf8]" fill="none" aria-hidden="true">
      {hTicks.map((x, i) => (
        <path key={x} d={`M${Math.round(x) + 0.5} 166v${i % 10 === 5 ? -5 : -3}`} stroke="#222" />
      ))}
      {[40, 50, 60, 70, 80, 90].map((mm, i) => (
        <text key={mm} x={160 + i * 153.5} y="158" textAnchor="middle" fontSize="9" fill="#111" fontFamily="Liberation Sans, sans-serif">{mm}</text>
      ))}
      <text x="1029" y="157" fontSize="9" fill="#111" fontFamily="Liberation Serif, serif">mm</text>
      <path d="M979.500 148v18" stroke="#222" />
      <path d="M59 152h3M59 152v3M61 154l6 6M64 152v2M59 158v2M67 157v3h-3" stroke="#222" />
    </svg>
  );
}

function VerticalRuler() {
  return (
    <svg viewBox="54 166 19 560" preserveAspectRatio="xMinYMin slice" className="block h-full w-[19px] shrink-0 bg-[#fbfbf8]" fill="none" aria-hidden="true">
      {vTicks.map((y, i) => (
        <path key={y} d={`M73 ${Math.round(y) + 0.5}h${i % 10 === 1 ? -5 : -2}`} stroke="#222" />
      ))}
      {[80, 70, 60, 50].map((mm, i) => (
        <text key={mm} x="55" y={197 + i * 153.3} fontSize="9" fill="#111" fontFamily="Liberation Sans, sans-serif">{mm}</text>
      ))}
      <path d="M56 673.500h17" stroke="#222" />
    </svg>
  );
}

function DropArrow() {
  return (
    <svg viewBox="0 0 5 3" className="h-[3px] w-[5px]" aria-hidden="true">
      <path d="M0 0h5L2.500 3z" />
    </svg>
  );
}

function Separator() {
  return <span className="h-5 w-px shrink-0 bg-[#c9c6b8]" />;
}

function ViewToolbar() {
  return (
    <div className="flex h-6 shrink-0 items-center bg-gradient-to-b from-[#f4f3ed] to-[#e8e5d6] pl-2">
      <div className="flex w-[90px] justify-around pr-1">
        {["filter", "eyeX", "eyeDots", "eye"].map((n) => <IconButton key={n} name={n} />)}
      </div>
      <Separator />
      <div className="flex w-[25px] justify-center"><IconButton name="picRed" /></div>
      {["dots", "lens", "zig", "heart"].map((n) => (
        <button key={n} type="button" aria-label={n} className="flex h-[21px] w-[32px] items-center justify-around rounded-[3px] border border-[#b3c3d8] bg-[#fcfdfc]">
          <Icon name={n} />
          <DropArrow />
        </button>
      ))}
      <div className="flex w-[78px] items-center justify-around pl-1">
        <IconButton name="frame" />
        <IconButton name="grid" />
        <IconButton name="cmd" />
        <DropArrow />
      </div>
      <Separator />
      <div className="flex w-[50px] justify-center gap-[6px]"><IconButton name="gauge" /><IconButton name="threeD" /></div>
      <Separator />
      <div className="flex w-[153px] justify-around pl-1">
        {["one", "ten", "ten", "hundred", "dotX", "tube", "light"].map((n, i) => <IconButton key={i} name={n} />)}
      </div>
      <Separator />
      <div className="flex w-[28px] justify-center"><IconButton name="comb" /></div>
      <Separator />
      <div className="flex w-[28px] justify-center"><IconButton name="morph" /></div>
    </div>
  );
}

function DocumentTabs() {
  return (
    <div className="flex h-5 shrink-0 items-stretch border-t border-[#bdbaa8] bg-[#fbf7e4]">
      <button type="button" className="relative flex w-[95px] items-center gap-1.5 pl-[21px]">
        <svg viewBox="0 0 95 19" preserveAspectRatio="none" className="absolute inset-0 h-full w-full" aria-hidden="true">
          <path d="M1 19L16 3q1-1 3-1h73l3 3v14z" fill="#ebe7d5" stroke="#b5b2a0" />
        </svg>
        <Icon name="startPage" className="relative h-[14px]" />
        <span className="relative whitespace-nowrap">Start Page</span>
      </button>
      <div className="relative flex w-[98px] items-center pl-[11px]">
        <svg viewBox="0 0 98 19" preserveAspectRatio="none" className="absolute inset-0 h-full w-full overflow-visible" aria-hidden="true">
          <path d="M-8 19L5 4q2-3 5-3h85l3 3v15z" fill="#fff" stroke="#c9c6b8" />
        </svg>
        <Icon name="docStar" className="relative" />
        <span className="relative ml-2 font-bold">Design1</span>
        <button type="button" aria-label="Close Design1" className="relative ml-auto mr-1 flex h-[14px] w-[13px] items-center justify-center bg-[#dc5c38]">
          <svg viewBox="0 0 8 8" className="h-2 w-2" stroke="#fff" strokeWidth="2"><path d="M1 1l6 6M7 1L1 7" /></svg>
        </button>
      </div>
      <button type="button" aria-label="Open documents" className="ml-auto mr-2 flex items-center">
        <svg viewBox="0 0 8 4" className="h-1 w-2"><path d="M0 0h8L4 4z" /></svg>
      </button>
    </div>
  );
}

function PanelTitle({ title, className }: { title: string; className: string }) {
  return (
    <div className={`flex h-[18px] shrink-0 items-center px-1 text-white ${className}`}>
      <h2>{title}</h2>
      <button type="button" aria-label={`Pin ${title}`} className="ml-auto">
        <svg viewBox="0 0 12 12" className="h-3 w-3" fill="none" stroke="#fff" strokeWidth="2"><path d="M7 2Q2 2 2 6t5 4q3 0 3-3" /><circle cx="8" cy="4" r="1.500" fill="#dce8ff" stroke="#dce8ff" /></svg>
      </button>
      <button type="button" aria-label={`Close ${title}`} className="ml-1.5 flex h-3 w-3 items-center justify-center bg-[#8ea6d8]">
        <svg viewBox="0 0 8 8" className="h-2 w-2" stroke="#fff" strokeWidth="2"><path d="M1 1l6 6M7 1L1 7" /></svg>
      </button>
    </div>
  );
}

const categoryTabs: ReactNode[] = [
  <><rect x="3" y="7" width="4" height="4" fill="#2c7cbc" /><rect x="8" y="8" width="5" height="5" fill="#3c9cdc" /><rect x="8" y="3" width="3" height="3" fill="#245c94" /></>,
  <path d="M1 13L4 2l2 11L8 2l2 11 2-11 2 11" stroke="#f01c1c" strokeWidth="2.500" fill="none" />,
  <><path d="M2 2h10v11H2z" fill="#d8e8e4" /><path d="M5 5h8v9H5z" fill="#9cb8b0" stroke="#e8f4f0" /></>,
  <><circle cx="5" cy="8" r="4" fill="#e81c1c" /><path d="M9 5l5 6M14 5l-5 6" stroke="#3c3c9c" strokeWidth="2" /></>,
  <path d="M2 3v4h9v5h3" stroke="#7cc4f4" strokeWidth="2" fill="none" strokeDasharray="2 1" />,
  <path d="M2 13L6 3h4l4 10" stroke="#2cc444" strokeWidth="4" fill="none" />,
  <><path d="M3 2h10v12H3z" fill="#e4ecfc" /><path d="M5 5h2M8 5h4M5 8h2M8 8h4M5 11h2" stroke="#3c5cac" strokeWidth="1.500" /></>,
];

function CategoryTabs() {
  return (
    <div className="flex h-[20px] shrink-0 items-end bg-[#f6f3e4] pl-1">
      {categoryTabs.map((art, i) => (
        <button key={i} type="button" aria-label={`Category ${i + 1}`} className="flex h-[19px] w-[26px] items-center justify-center">
          <svg viewBox="0 0 30 19" className="h-[19px] w-[30px] shrink-0 overflow-visible" fill="none">
            <path d="M-1 19L7 2q1-1 2-1h15q2 0 3 2l7 16" fill={i === 0 ? "#fff" : "#f3efe0"} stroke="#aeab98" />
            <svg x="8" y="2" width="15" height="15" viewBox="0 0 16 16">
              <rect width="16" height="16" fill="#061018" />
              {art}
            </svg>
          </svg>
        </button>
      ))}
    </div>
  );
}

function PropertyTable() {
  return (
    <table className="w-full table-fixed border-collapse bg-white">
      <colgroup>
        <col className="w-[17px]" />
        <col className="w-[132px]" />
        <col />
      </colgroup>
      <tbody>
        {rows.map((row, i) =>
          row.group ? (
            <tr key={i} className="h-[15px] bg-[#dcd9c8] text-[#a9a695]">
              <td className="p-0">
                <span className="ml-2 flex h-[8px] w-[8px] items-center justify-center border border-[#8ca0bc] bg-white"><span className="h-px w-1 bg-black" /></span>
              </td>
              <th colSpan={2} className="h-[15px] p-0 pl-1 text-left leading-[14px] font-semibold">{row.name}</th>
            </tr>
          ) : (
            <tr key={i} className={`h-[15px] ${row.disabled ? "text-[#a9a9a0]" : ""}`}>
              <td className="bg-[#dcd9c8] p-0" />
              <th className={`border-r border-b border-[#dedbcb] p-0 pl-1 text-left leading-[14px] font-normal whitespace-nowrap ${row.selected ? "bg-[#316ac5] text-white" : ""}`}>{row.name}</th>
              <td className="border-b border-[#dedbcb] p-0 leading-[14px] whitespace-pre">
                {row.kind === "swatch" ? (
                  <span className="flex items-center gap-1 pl-0.5"><span className="h-[14px] w-10 border-x-4 border-[#1cae1c] bg-[#00c400]" />{row.value}</span>
                ) : row.kind === "check" ? (
                  <input type="checkbox" aria-label={row.name} className="ml-0.5 block h-[12px] w-[12px] appearance-none border border-[#2c5078] bg-[#eef1f4]" />
                ) : row.selected ? (
                  <span className="flex items-center justify-between pl-1 font-bold">{row.value}<Chevron className="h-[13px] w-3" /></span>
                ) : (
                  <span className="pl-1">{row.value}</span>
                )}
              </td>
            </tr>
          ),
        )}
      </tbody>
    </table>
  );
}

function PropertiesPanel() {
  return (
    <aside className="flex w-[304px] shrink-0 flex-col border-t border-[#bdbaa8] bg-[#ece9d8]">
      <PanelTitle title="Properties" className="bg-gradient-to-r from-[#2a52a4] to-[#7288bc]" />
      <div className="flex min-h-0 flex-1 flex-col border-l border-[#b5b2a0] px-0.5 pt-1">
        <div className="relative shrink-0">
          <select aria-label="Settings scope" className="block h-[18px] w-full appearance-none border border-[#7f9db9] bg-white pl-[3px] font-['Liberation_Sans',Arial,sans-serif]">
            <option>Selection settings</option>
          </select>
          <Chevron className="pointer-events-none absolute top-[2px] right-[2px] h-[14px] w-3" />
        </div>
        <div className="flex h-6 shrink-0 items-center pl-1">
          <IconButton name="tree" />
          <span className="w-[6px]" />
          <IconButton name="az" />
          <span className="mx-1.5"><Separator /></span>
          <button type="button" aria-label="Show set" className="flex h-[20px] w-[20px] items-center justify-center rounded-[3px] border border-[#a4b8d4] bg-white"><Icon name="treeChk" /></button>
          <span className="mx-[3px] flex gap-1"><IconButton name="treeB" /><IconButton name="fav" /></span>
          <span className="mx-1"><Separator /></span>
          <span className="mr-1.5 flex"><IconButton name="favB" /></span>
          <Separator />
          <span className="ml-1.5 flex"><IconButton name="bolt" /></span>
        </div>
        <div className="flex shrink-0 bg-white">
          <input type="text" aria-label="Search properties" className="h-[17px] min-w-0 flex-1 border border-black bg-white px-1" />
          <span className="flex w-[18px] items-center justify-center"><Icon name="search" className="h-3" /></span>
        </div>
        <CategoryTabs />
        <div className="flex min-h-0 flex-1 border-t border-[#c9c6b4]">
          <div className="min-w-0 flex-1 overflow-hidden"><PropertyTable /></div>
          <div className="flex w-[18px] flex-col items-center bg-[#f7f5ef] pr-1">
            <span className="flex h-4 w-3 rotate-180 items-center justify-center"><Chevron className="h-4 w-3" /></span>
            <span className="mt-px h-[277px] w-3 rounded-[2px] border border-[#b0c4f4] bg-[#c3d3fc]" />
            <span className="mt-auto"><Chevron className="h-3 w-3" /></span>
          </div>
        </div>
        <div className="mx-0.5 mt-1 h-[47px] shrink-0 border border-[#bfbca8] px-1 py-0.5 font-bold">Fur zig-zags</div>
        <div className="mt-[4px] h-px shrink-0 bg-[#8f8c7c]" />
      </div>
      <div className="flex h-[20px] shrink-0 items-center bg-[#faf6e4] pb-0.5 text-[#8f8c7c]" role="tablist">
        <button type="button" role="tab" className="pr-1 pl-[7px] whitespace-nowrap">Sequence View</button>
        <button type="button" role="tab" aria-selected="true" className="flex h-[18px] items-center border-r border-b border-l border-[#333] border-l-[#c9c6b4] bg-[#ece9d8] px-0.5 font-semibold text-black">
          <Icon name="hand" />Properties
        </button>
        <button type="button" role="tab" className="border-r border-[#b5b2a0] px-1 leading-3 whitespace-nowrap">Elements View</button>
        <button type="button" role="tab" className="border-r border-[#b5b2a0] px-1.5 leading-3 whitespace-nowrap">Stitch List</button>
      </div>
      <div className="mt-1 h-[7px] shrink-0 overflow-hidden">
        <PanelTitle title="Digital View" className="bg-gradient-to-r from-[#3c6cd4] to-[#94b0ec]" />
      </div>
    </aside>
  );
}

function OptionsBar() {
  return (
    <div className="flex h-[27px] shrink-0 items-center gap-[7px] overflow-hidden border-b border-[#c3c0b0] bg-[#f0eee5] pl-1">
      {["trimBlue", "stopBlue"].map((n) => (
        <button key={n} type="button" aria-label={n} className="flex h-[21px] w-[44px] shrink-0 items-center justify-between border border-[#a4b8d8] bg-[#f6f9ff] pl-1">
          <Icon name={n} />
          <Chevron className="h-[19px] w-[14px]" />
        </button>
      ))}
      <Combo label="Fur stitch type:" value="Standard" labelWidth="w-[69px]" width="w-[86px]" />
      <Combo label="Fur zig-zags:" value="Number" labelWidth="w-[60px]" width="w-[88px]" />
      <label className="flex shrink-0 items-center">
        <span className="w-[54px] whitespace-nowrap">Fur density:</span>
        <input type="text" defaultValue="12.0 pt" className="h-[18px] w-[44px] border border-[#222] bg-white pl-[3px]" />
      </label>
      <Combo label="" value="Satin" labelWidth="w-0" width="w-[122px]" swatch />
      <Combo label="Connection locks:" value="Always" labelWidth="w-[82px]" width="w-[88px]" />
      <Combo label="Start lock:" value="None" labelWidth="w-[47px]" width="w-[87px]" />
      <Combo label="End lock:" value="None" labelWidth="w-[42px]" width="w-[88px]" />
      <Combo label="Zig-zag style:" value="Smooth" labelWidth="w-[61px]" width="w-[87px]" />
      <button type="button" aria-label="Apply" className="ml-2 flex h-[18px] w-[18px] shrink-0 items-center justify-center rounded-[3px] border border-[#34588c] bg-white">
        <Icon name="bolt" className="h-[14px]" />
      </button>
    </div>
  );
}

function TitleBar() {
  return (
    <header className="flex h-[30px] shrink-0 items-center border-t-3 border-[#dfe3f2] bg-gradient-to-b from-[#2a80f8] via-[#0058e6] via-20% to-[#0a62fa] pt-0.5 pl-[5px] text-white">
      <Icon name="logo" className="h-[14px]" />
      <h1 className="ml-px font-['Open_Sans','Noto_Sans',sans-serif] text-[11px] font-bold [text-shadow:1px_1px_#0a2c84]">Tajima DG/ML by Pulse - Design1</h1>
      <div className="mr-px ml-auto flex gap-[2px]">
        <button type="button" aria-label="Minimize" className="flex h-[19px] w-[19px] items-end rounded-[3px] border border-white bg-[#2c62e4] p-1"><span className="h-[3px] w-[6px] bg-white" /></button>
        <button type="button" aria-label="Maximize" className="flex h-[19px] w-[19px] items-center justify-center rounded-[3px] border border-white bg-[#2c62e4]"><span className="h-[10px] w-[11px] border border-t-3 border-white" /></button>
        <button type="button" aria-label="Close" className="flex h-[19px] w-[19px] items-center justify-center rounded-[3px] border border-white bg-[#e0532c]">
          <svg viewBox="0 0 10 10" className="h-[11px] w-[11px]" stroke="#fff" strokeWidth="2"><path d="M1 1l8 8M9 1L1 9" /></svg>
        </button>
      </div>
    </header>
  );
}

export default function App() {
  return (
    <div className="relative flex h-screen flex-col overflow-hidden bg-[#f0eee5] font-['Open_Sans','Noto_Sans',sans-serif] text-[10px] leading-[14px] text-[#1c1820]">
      <TitleBar />
      <div className="flex min-h-0 flex-1 flex-col border-l-3 border-[#0a50e0]">
        <nav className="flex h-[21px] shrink-0 items-center border-b border-[#c3c0b0] bg-gradient-to-r from-[#f5f4f2] to-[#ece9d8]">
          <Grip />
          <div className="flex gap-[13px] pl-1">
            {menus.map((m) => <button key={m} type="button">{m}</button>)}
          </div>
        </nav>
        <div className="flex h-[25px] shrink-0 border-b border-[#c3c0b0] bg-gradient-to-r from-[#f5f4f2] to-[#ece9d8]">
          {toolGroups.map((g, i) => (
            <div key={i} className={`flex shrink-0 items-center border-r border-[#b9b7a6] ${g.width}`}>
              <Grip />
              <div className="flex flex-1 items-center justify-around">
                {g.items.map((n, k) => <Fragment key={k}>{n === "|" ? <Separator /> : <IconButton name={n} />}</Fragment>)}
              </div>
            </div>
          ))}
        </div>
        <div className="flex min-h-0 flex-1">
          <div className="flex shrink-0 border-r border-[#b9b7a6] bg-[#f3f3ef]">
            {palettes.map((column, c) => (
              <div key={c} className="w-[25px]">
                {column.map((g, i) => (
                  <div key={i} className={`flex flex-col border-r border-b border-[#c6c4b6] ${g.height}`}>
                    <Grip vertical />
                    <div className="flex flex-1 flex-col items-center justify-around">
                      {g.items.map((n) => n === "arrow" ? (
                        <button key={n} type="button" aria-label="Select" aria-pressed="true" className="flex h-5 w-5 items-center justify-center rounded-[3px] border border-[#a4b4cc] bg-white">
                          <Icon name={n} />
                        </button>
                      ) : (
                        <IconButton key={n} name={n} />
                      ))}
                    </div>
                  </div>
                ))}
              </div>
            ))}
          </div>
          <div className="flex min-w-0 flex-1 flex-col">
            <OptionsBar />
            <div className="flex min-h-0 flex-1">
              <main className="flex min-w-0 flex-1 flex-col">
                <DocumentTabs />
                <ViewToolbar />
                <div className="mr-[3px] shrink-0 border-t border-l border-[#8c8a80]"><HorizontalRuler /></div>
                <div className="mr-[3px] flex min-h-0 flex-1">
                  <VerticalRuler />
                  <div className="min-h-0 min-w-0 flex-1 bg-[#3c3c3c]"><Design /></div>
                  <div className="flex w-4 shrink-0 flex-col items-center border-l border-[#8c8a80] bg-[#fbfaf5] pt-0.5">
                    <span className="rotate-180"><Chevron className="h-[14px] w-[13px]" /></span>
                    <span className="mt-[323px] h-[7px] w-[13px] rounded-[2px] bg-[#c1d2f8]" />
                  </div>
                </div>
              </main>
              <div className="w-1 shrink-0 border-l border-[#c3c0b0] bg-[#ece9d8]" />
              <PropertiesPanel />
            </div>
          </div>
        </div>
      </div>
      {/* red pen notes over the window */}
      <svg className="pointer-events-none absolute top-0 left-0 h-[726px] w-[1357px]" fill="none" stroke="#ee1414" strokeWidth="1.500" strokeLinecap="round" aria-hidden="true">
        <path d="M453 105q15 2 19-9 4-6 4-14-40-1-82 2-20 3-40-1-20-4-40 0-7 4-4 13 4 13 31 18 50 6 90 2 18-1 28-3" />
        <path d="M987 331q30 1 60 4l28 2M1046 331q14 5 29 6-16 1-24 6" />
      </svg>
    </div>
  );
}
